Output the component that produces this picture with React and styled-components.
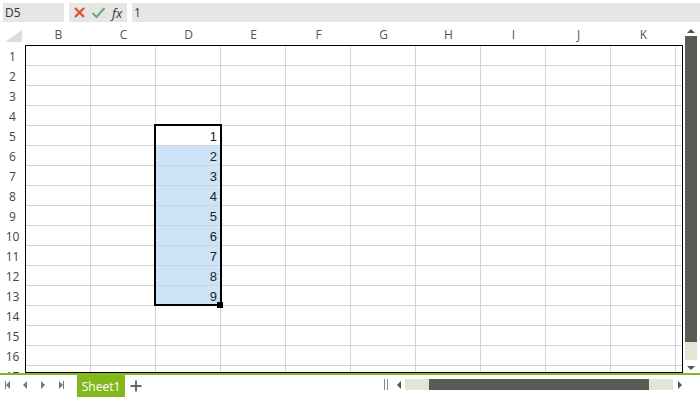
import styled, { createGlobalStyle } from 'styled-components';

const GlobalStyle = createGlobalStyle`
  body {
    margin: 0;
    background: #fff;
    font-family: "Open Sans", "Liberation Sans", sans-serif;
    overflow: hidden;
  }
`;

const COLS = ['B', 'C', 'D', 'E', 'F', 'G', 'H', 'I', 'J', 'K', 'L'];
const HEAD_COLS = COLS.slice(0, 10);
const ROWS = Array.from({ length: 17 }, (_, i) => i + 1);
const GREEN = '#82b81c';

const Page = styled.div`
  width: 700px;
  height: 400px;
  display: flex;
  flex-direction: column;
  overflow: hidden;
`;

const FormulaBar = styled.div`
  display: flex;
  gap: 5px;
  height: 19px;
  margin: 3px 0 0 3px;
`;

const Box = styled.div`
  background: #e6e6e6;
  height: 100%;
  display: flex;
  align-items: center;
  font-size: 12px;
  color: #333;
  box-sizing: border-box;
  padding-left: ${p => p.$pad || 2}px;
  width: ${p => (p.$w ? `${p.$w}px` : 'auto')};
  flex: ${p => (p.$grow ? 1 : 'none')};
  gap: 5px;
`;

const Fx = styled.span`
  font-family: "Open Sans", "Liberation Sans", sans-serif;
  font-style: italic;
  font-size: 13px;
  color: #333;
  margin-left: 1px;
`;

const Main = styled.div`
  display: flex;
  margin-top: 3px;
  height: 348px;
`;

const SheetArea = styled.div`
  width: 683px;
  display: flex;
  flex-direction: column;
  overflow: hidden;
`;

const HeaderRow = styled.div`
  display: flex;
  height: 20px;
  flex: none;
`;

const Corner = styled.div`
  width: 26px;
  flex: none;
  display: flex;
  align-items: flex-end;
  justify-content: flex-start;
  padding: 0 0 3px 5px;
  box-sizing: border-box;
`;

const ColHead = styled.div`
  width: 65px;
  flex: none;
  text-align: center;
  font-size: 12px;
  line-height: 20px;
  color: #555;
`;

const Body = styled.div`
  display: flex;
  flex: 1;
  min-height: 0;
`;

const RowHeads = styled.div`
  width: 25px;
  flex: none;
  padding-top: 1px;
  overflow: hidden;
`;

const RowHead = styled.div`
  height: 20px;
  text-align: center;
  font-size: 12px;
  line-height: 21px;
  color: #444;
`;

const Grid = styled.div`
  position: relative;
  width: 658px;
  border: 1px solid #000;
  box-sizing: border-box;
  overflow: hidden;
`;

const GridRow = styled.div`
  display: flex;
  height: 20px;
`;

const Cell = styled.div`
  width: 65px;
  flex: none;
  box-sizing: border-box;
  border-right: 1px solid #d4d4d4;
  border-bottom: 1px solid #d4d4d4;
  background: ${p => (p.$sel ? '#cce3f8' : '#fff')};
  text-align: right;
  padding-right: 3px;
  font-family: "Liberation Sans", sans-serif;
  font-size: 13px;
  line-height: 21px;
  color: #222;
`;

const Selection = styled.div`
  position: absolute;
  left: 128px;
  top: 78px;
  width: 68px;
  height: 182px;
  border: 2px solid #000;
  box-sizing: border-box;
  pointer-events: none;
`;

const Handle = styled.div`
  position: absolute;
  right: -3px;
  bottom: -4px;
  width: 6px;
  height: 6px;
  background: #000;
`;

const VScroll = styled.div`
  width: 12px;
  margin-left: 2px;
  display: flex;
  flex-direction: column;
  align-items: center;
  height: 347px;
`;

const Thumb = styled.div`
  background: #5b5b55;
  width: 12px;
  height: ${p => p.$len}px;
  flex: none;
`;

const Track = styled.div`
  background: #e2e6d5;
  width: ${p => (p.$v ? '12px' : 'auto')};
  height: ${p => (p.$v ? `${p.$len}px` : '11px')};
  flex: none;
  display: flex;
`;

const Gap = styled.div`
  height: ${p => p.$h}px;
  flex: none;
`;

const Arrow = styled.div`
  width: 0;
  height: 0;
  border-left: ${p => (p.$dir === 'up' || p.$dir === 'down' ? '4px solid transparent' : p.$dir === 'right' ? `4px solid ${p.$c}` : 'none')};
  border-right: ${p => (p.$dir === 'up' || p.$dir === 'down' ? '4px solid transparent' : p.$dir === 'left' ? `4px solid ${p.$c}` : 'none')};
  border-top: ${p => (p.$dir === 'left' || p.$dir === 'right' ? '4px solid transparent' : p.$dir === 'down' ? `4px solid ${p.$c}` : 'none')};
  border-bottom: ${p => (p.$dir === 'left' || p.$dir === 'right' ? '4px solid transparent' : p.$dir === 'up' ? `4px solid ${p.$c}` : 'none')};
  flex: none;
`;

const BottomBar = styled.div`
  border-top: 2px solid ${GREEN};
  height: 25px;
  display: flex;
  align-items: flex-start;
`;

const Nav = styled.div`
  display: flex;
  align-items: center;
  height: 20px;
  width: 77px;
  padding-left: 5px;
  box-sizing: border-box;
  gap: 11px;
`;

const NavBtn = styled.div`
  display: flex;
  align-items: center;
  width: 7px;
  height: 8px;
`;

const Bar = styled.div`
  width: 1px;
  height: 8px;
  background: #777;
`;

const Tab = styled.div`
  background: ${GREEN};
  color: #fff;
  font-size: 12px;
  height: 22px;
  width: 48px;
  display: flex;
  align-items: center;
  justify-content: center;
`;

const Plus = styled.div`
  margin: 5px 0 0 5px;
  display: flex;
`;

const HScroll = styled.div`
  margin-left: auto;
  margin-right: 18px;
  margin-top: 4px;
  display: flex;
  align-items: center;
  height: 11px;
`;

const Splitter = styled.div`
  width: 4px;
  height: 11px;
  border-left: 1px solid #888;
  border-right: 1px solid #888;
  margin-right: 9px;
  box-sizing: border-box;
`;

const HThumb = styled.div`
  background: #5b5b55;
  margin-left: 24px;
  width: 220px;
  height: 11px;
`;

const NavIcon = ({ dir, bar }) => (
  <NavBtn>
    {bar && dir === 'left' && <Bar />}
    <Arrow $dir={dir} $c="#777" />
    {bar && dir === 'right' && <Bar />}
  </NavBtn>
);

export default function App() {
  return (
    <Page>
      <GlobalStyle />
      <FormulaBar>
        <Box $w={61}>D5</Box>
        <Box $w={58} $pad={4}>
          <svg width="13" height="13" viewBox="0 0 13 13">
            <path d="M2 2 L11 11 M11 2 L2 11" stroke="#e2532d" strokeWidth="2.4" />
          </svg>
          <svg width="15" height="13" viewBox="0 0 15 13">
            <path d="M1.5 7 L5.5 11 L13.5 2" stroke="#72a672" strokeWidth="2" fill="none" />
          </svg>
          <Fx>fx</Fx>
        </Box>
        <Box $grow>1</Box>
      </FormulaBar>
      <Main>
        <SheetArea>
          <HeaderRow>
            <Corner>
              <svg width="17" height="12" viewBox="0 0 17 12">
                <polygon points="17,0 17,12 0,12" fill="#dcdcdc" />
              </svg>
            </Corner>
            {HEAD_COLS.map(c => (
              <ColHead key={c}>{c}</ColHead>
            ))}
          </HeaderRow>
          <Body>
            <RowHeads>
              {ROWS.map(r => (
                <RowHead key={r}>{r}</RowHead>
              ))}
            </RowHeads>
            <Grid>
              {ROWS.map(r => (
                <GridRow key={r}>
                  {COLS.map(c => {
                    const inRange = c === 'D' && r >= 5 && r <= 13;
                    return (
                      <Cell key={c} $sel={inRange && r > 5}>
                        {inRange ? r - 4 : ''}
                      </Cell>
                    );
                  })}
                </GridRow>
              ))}
              <Selection>
                <Handle />
              </Selection>
            </Grid>
          </Body>
        </SheetArea>
        <VScroll>
          <Gap $h={4} />
          <Arrow $dir="up" $c="#555" />
          <Gap $h={3} />
          <Thumb $len={306} />
          <Track $v $len={18} />
          <Gap $h={6} />
          <Arrow $dir="down" $c="#555" />
        </VScroll>
      </Main>
      <BottomBar>
        <Nav>
          <NavIcon dir="left" bar />
          <NavIcon dir="left" />
          <NavIcon dir="right" />
          <NavIcon dir="right" bar />
        </Nav>
        <Tab>Sheet1</Tab>
        <Plus>
          <svg width="12" height="12" viewBox="0 0 12 12">
            <path d="M6 0.5 V11.5 M0.5 6 H11.5" stroke="#666" strokeWidth="2" />
          </svg>
        </Plus>
        <HScroll>
          <Splitter />
          <Arrow $dir="left" $c="#555" />
          <Track style={{ width: 268, marginLeft: 4, marginRight: 5 }}>
            <HThumb />
          </Track>
          <Arrow $dir="right" $c="#555" />
        </HScroll>
      </BottomBar>
    </Page>
  );
}
